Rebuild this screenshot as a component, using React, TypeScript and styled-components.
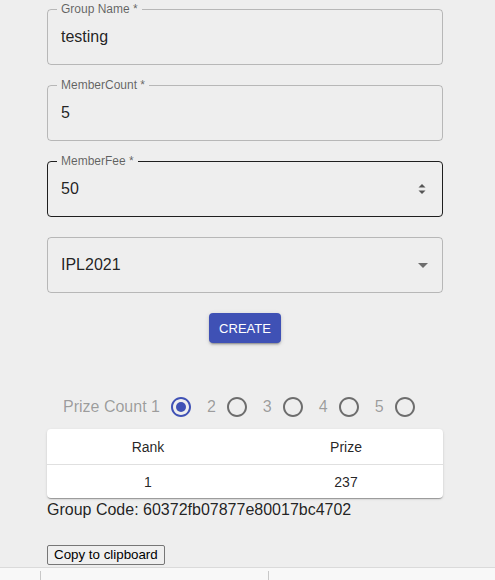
import React from "react";
import styled, { createGlobalStyle } from "styled-components";

const Global = createGlobalStyle`
  html, body { margin: 0; padding: 0; background: #eeeeee; }
  body { font-family: "Liberation Sans", Arial, sans-serif; color: rgba(0,0,0,0.87); }
  * { box-sizing: border-box; }
`;

const Page = styled.div`
  width: 495px;
  height: 580px;
  overflow: hidden;
  display: flex;
  flex-direction: column;
`;

const Form = styled.div`
  width: 396px;
  margin-left: 47px;
  padding-top: 9px;
  display: flex;
  flex-direction: column;
  gap: 20px;
`;

const Field = styled.div<{ $focused?: boolean }>`
  position: relative;
  height: 56px;
  border: 1px solid ${(p) => (p.$focused ? "rgba(0,0,0,0.87)" : "rgba(0,0,0,0.23)")};
  border-radius: 4px;
  display: flex;
  align-items: center;
  padding: 0 13px;
`;

const FieldLabel = styled.span`
  position: absolute;
  left: 9px;
  top: -7px;
  padding: 0 4px;
  background: #eeeeee;
  font-size: 12px;
  line-height: 12px;
  color: rgba(0,0,0,0.6);
`;

const Value = styled.span`
  flex: 1;
  font-size: 16px;
  line-height: 19px;
  margin-top: -1px;
  color: rgba(0,0,0,0.87);
`;

const Adornment = styled.span`
  display: flex;
  align-items: center;
  color: rgba(0,0,0,0.54);
`;

const ButtonRow = styled.div`
  display: flex;
  justify-content: center;
`;

const CreateButton = styled.button`
  height: 30px;
  padding: 4px 10px;
  border: none;
  border-radius: 4px;
  background: #3f51b5;
  color: #fff;
  font-family: "Liberation Sans", Arial, sans-serif;
  font-size: 13px;
  text-transform: uppercase;
  box-shadow: 0px 3px 1px -2px rgba(0,0,0,0.2), 0px 2px 2px 0px rgba(0,0,0,0.14), 0px 1px 5px 0px rgba(0,0,0,0.12);
`;

const Section = styled.div`
  width: 396px;
  margin-left: 47px;
  display: flex;
  flex-direction: column;
`;

const RadioRow = styled.div`
  margin-top: 43px;
  height: 42px;
  padding-left: 16px;
  display: flex;
  align-items: center;
  gap: 5px;
`;

const Option = styled.label`
  display: flex;
  align-items: center;
`;

const OptionText = styled.span`
  font-size: 16px;
  color: rgba(0,0,0,0.36);
`;

const RadioBox = styled.span`
  width: 42px;
  height: 42px;
  display: flex;
  align-items: center;
  justify-content: center;
`;

const Table = styled.div`
  margin-top: 1px;
  background: #fff;
  border-radius: 4px;
  box-shadow: 0px 2px 1px -1px rgba(0,0,0,0.2), 0px 1px 1px 0px rgba(0,0,0,0.14), 0px 1px 3px 0px rgba(0,0,0,0.12);
`;

const TRow = styled.div<{ $head?: boolean }>`
  display: grid;
  grid-template-columns: 202px 1fr;
  height: ${(p) => (p.$head ? "36px" : "33px")};
  border-bottom: ${(p) => (p.$head ? "1px solid rgba(224,224,224,1)" : "none")};
`;

const TCell = styled.div`
  display: flex;
  align-items: center;
  justify-content: center;
  font-size: 14px;
  color: rgba(0,0,0,0.87);
`;

const Code = styled.p`
  margin: 0;
  font-size: 16px;
  line-height: 24px;
  color: rgba(0,0,0,0.87);
`;

const CopyButton = styled.button`
  align-self: flex-start;
  margin-top: 23px;
  height: 20px;
  padding: 1px 6px;
  border: 1px solid #767676;
  border-radius: 2px;
  background: #efefef;
  color: #000;
  font-family: "Liberation Sans", Arial, sans-serif;
  font-size: 13.333px;
  line-height: 16px;
`;

const Footer = styled.div`
  margin-top: 2px;
  flex: 1;
  border-top: 1px solid #dadada;
  background: #f8f8f8;
  display: flex;
  padding-left: 40px;
  padding-top: 3px;
`;

const FooterCell = styled.div`
  width: 232px;
  border-left: 1px solid #c8c8c8;
`;

const Radio = ({ checked }: { checked?: boolean }) => (
  <RadioBox>
    <svg width="24" height="24" viewBox="0 0 24 24">
      <path
        fill={checked ? "#3f51b5" : "rgba(0,0,0,0.54)"}
        d="M12 2C6.48 2 2 6.48 2 12s4.48 10 10 10 10-4.48 10-10S17.52 2 12 2zm0 18c-4.42 0-8-3.58-8-8s3.58-8 8-8 8 3.58 8 8-3.58 8-8 8z"
      />
      {checked && <circle cx="12" cy="12" r="5" fill="#3f51b5" />}
    </svg>
  </RadioBox>
);

const Spinner = () => (
  <svg width="10" height="14" viewBox="0 0 10 14">
    <path d="M1.5 5.5 L5 2 L8.5 5.5 Z" fill="#555" />
    <path d="M1.5 8.5 L5 12 L8.5 8.5 Z" fill="#555" />
  </svg>
);

const DropArrow = () => (
  <svg width="24" height="24" viewBox="0 0 24 24" style={{ marginRight: -6 }}>
    <path d="M7 10l5 5 5-5z" fill="currentColor" />
  </svg>
);

const fields = [
  { label: "Group Name *", value: "testing" },
  { label: "MemberCount *", value: "5" },
];

export default function App() {
  return (
    <Page>
      <Global />
      <Form>
        {fields.map((f) => (
          <Field key={f.label}>
            <FieldLabel>{f.label}</FieldLabel>
            <Value>{f.value}</Value>
          </Field>
        ))}
        <Field $focused>
          <FieldLabel>MemberFee *</FieldLabel>
          <Value>50</Value>
          <Adornment style={{ marginRight: 2 }}>
            <Spinner />
          </Adornment>
        </Field>
        <Field>
          <Value>IPL2021</Value>
          <Adornment>
            <DropArrow />
          </Adornment>
        </Field>
        <ButtonRow>
          <CreateButton>Create</CreateButton>
        </ButtonRow>
      </Form>
      <Section>
        <RadioRow>
          {["Prize Count 1", "2", "3", "4", "5"].map((t, i) => (
            <Option key={t}>
              <OptionText>{t}</OptionText>
              <Radio checked={i === 0} />
            </Option>
          ))}
        </RadioRow>
        <Table>
          <TRow $head>
            <TCell>Rank</TCell>
            <TCell>Prize</TCell>
          </TRow>
          <TRow>
            <TCell>1</TCell>
            <TCell>237</TCell>
          </TRow>
        </Table>
        <Code>Group Code: 60372fb07877e80017bc4702</Code>
        <CopyButton>Copy to clipboard</CopyButton>
      </Section>
      <Footer>
        <FooterCell />
        <FooterCell />
      </Footer>
    </Page>
  );
}
